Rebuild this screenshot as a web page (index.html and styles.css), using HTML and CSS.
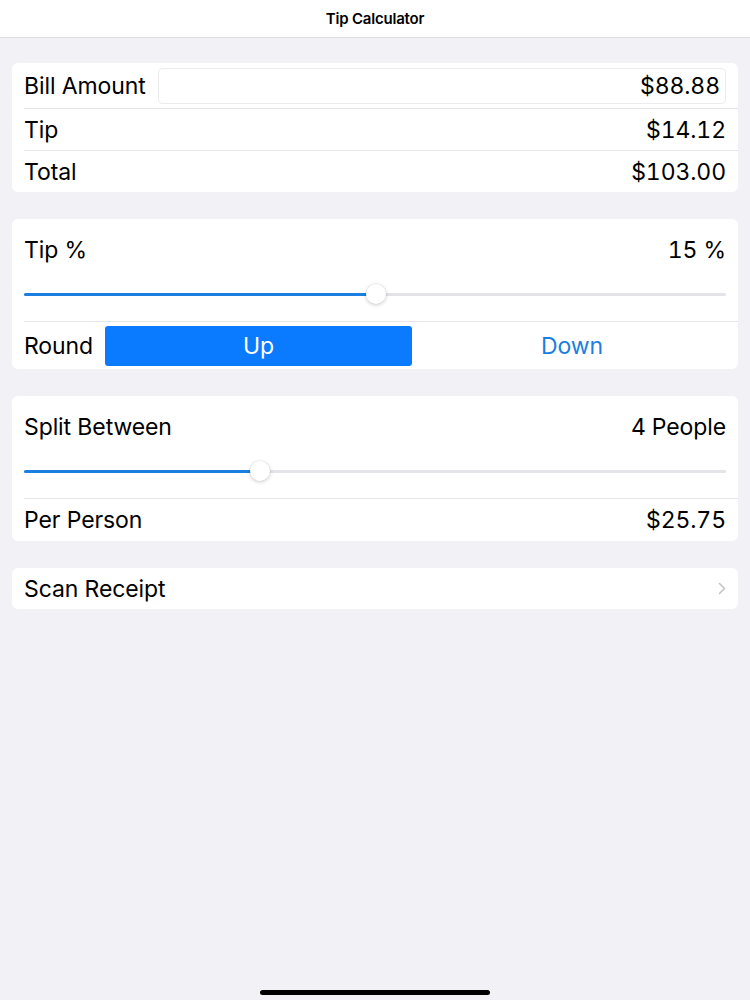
FILE: index.html
```html
<!DOCTYPE html>
<html>
<head>
<meta charset="utf-8">
<link rel="stylesheet" href="styles.css">
</head>
<body>
<div class="screen">
  <header class="nav">Tip Calculator</header>
  <main class="content">
    <section class="card card-totals">
      <div class="row row-bill">
        <span class="label label-bill">Bill Amount</span>
        <div class="field">$88.88</div>
      </div>
      <div class="row">
        <span class="label">Tip</span>
        <span class="value">$14.12</span>
      </div>
      <div class="row">
        <span class="label">Total</span>
        <span class="value">$103.00</span>
      </div>
    </section>

    <section class="card">
      <div class="slider-row">
        <div class="slider-head">
          <span class="label">Tip %</span>
          <span class="value">15 %</span>
        </div>
        <div class="slider">
          <div class="track"><div class="fill" style="width: 50.1%"></div></div>
          <div class="thumb" style="left: 50.1%"></div>
        </div>
      </div>
      <div class="row row-round">
        <span class="label label-round">Round</span>
        <div class="segmented">
          <div class="seg seg-on">Up</div>
          <div class="seg">Down</div>
        </div>
      </div>
    </section>

    <section class="card">
      <div class="slider-row">
        <div class="slider-head">
          <span class="label">Split Between</span>
          <span class="value">4 People</span>
        </div>
        <div class="slider">
          <div class="track"><div class="fill" style="width: 33.6%"></div></div>
          <div class="thumb" style="left: 33.6%"></div>
        </div>
      </div>
      <div class="row row-person">
        <span class="label">Per Person</span>
        <span class="value">$25.75</span>
      </div>
    </section>

    <section class="card">
      <div class="row row-scan">
        <span class="label">Scan Receipt</span>
        <svg class="chevron" width="8" height="13" viewBox="0 0 8 13"><path d="M1.5 1.5 L6.5 6.5 L1.5 11.5" fill="none" stroke="#c4c4c7" stroke-width="1.6" stroke-linecap="round" stroke-linejoin="round"/></svg>
      </div>
    </section>
  </main>
  <div class="home-indicator"></div>
</div>
</body>
</html>
```
FILE: styles.css
```css
* { box-sizing: border-box; }
html, body { margin: 0; padding: 0; }
body {
  background: #f2f1f6;
  font-family: Inter, "Noto Sans", "Liberation Sans", sans-serif;
  color: #000;
}
.screen {
  width: 750px;
  height: 1000px;
  display: flex;
  flex-direction: column;
  position: relative;
}
.nav {
  height: 38px;
  background: #fff;
  border-bottom: 1px solid #dcdce0;
  display: flex;
  align-items: center;
  justify-content: center;
  font-size: 15px;
  font-weight: 600;
  letter-spacing: -0.2px;
}
.content {
  padding: 25px 12px 0;
  display: flex;
  flex-direction: column;
  gap: 27px;
}
.card {
  background: #fff;
  border-radius: 6px;
  padding-left: 12px;
  display: flex;
  flex-direction: column;
}
.row {
  height: 42px;
  display: flex;
  align-items: center;
  justify-content: space-between;
  padding-right: 12px;
  border-top: 1px solid #e6e6ea;
}
.row:first-child { border-top: none; }
.row-bill { height: 45px; }
.row-person { height: 43px; }
.row-scan { height: 41px; }
.label, .value, .field, .seg {
  font-size: 23px;
  letter-spacing: -0.1px;
}
.value, .field { font-feature-settings: "tnum" 1; }
.label-bill { flex: 0 0 134px; white-space: nowrap; }
.label-round { flex: 0 0 81px; }
.field {
  flex: 1;
  height: 36px;
  border: 1px solid #ececef;
  border-radius: 4px;
  display: flex;
  align-items: center;
  justify-content: flex-end;
  padding-right: 5px;
}
.slider-row {
  padding-right: 12px;
  height: 102px;
  display: flex;
  flex-direction: column;
}
.slider-head {
  display: flex;
  justify-content: space-between;
  align-items: center;
  height: 44px;
  margin-top: 9px;
}
.slider {
  position: relative;
  height: 20px;
  margin-top: 12px;
}
.track {
  position: absolute;
  left: 0; right: 0; top: 9px;
  height: 3px;
  background: #e4e4e8;
  border-radius: 2px;
}
.fill {
  height: 100%;
  background: #1a7fe0;
  border-radius: 2px;
}
.thumb {
  position: absolute;
  top: 0;
  width: 20px;
  height: 20px;
  margin-left: -10px;
  background: #fff;
  border-radius: 50%;
  box-shadow: 0 1px 4px rgba(0,0,0,0.2), 0 0 0 0.5px rgba(0,0,0,0.05);
}
.row-round { height: 48px; padding-right: 6px; }
.segmented {
  flex: 1;
  display: flex;
  height: 40px;
}
.seg {
  flex: 1;
  display: flex;
  align-items: center;
  justify-content: center;
  color: #1a7fe0;
  border-radius: 3px;
}
.seg-on {
  background: #0a7aff;
  color: #fff;
  flex: 0 0 307px;
}
.chevron { margin-right: 0; }
.home-indicator {
  position: absolute;
  left: 260px;
  top: 990px;
  width: 230px;
  height: 5px;
  border-radius: 3px;
  background: #000;
}
```
